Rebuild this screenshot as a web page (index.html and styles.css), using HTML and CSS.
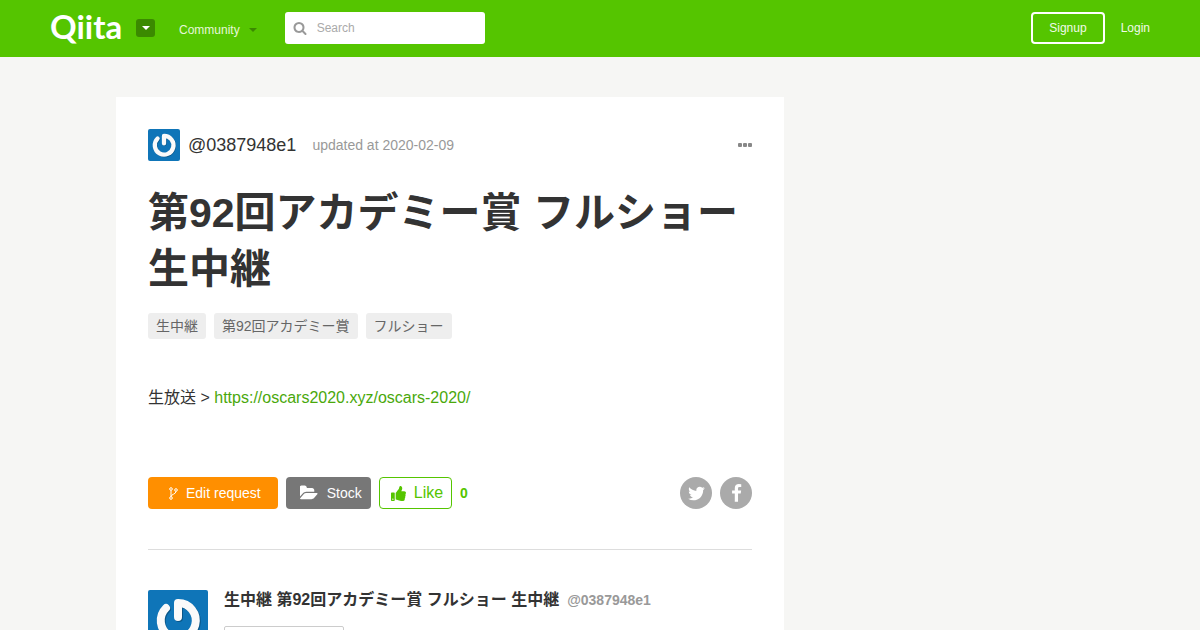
FILE: index.html
```html
<!DOCTYPE html>
<html lang="ja">
<head>
    <meta charset="UTF-8">
    <meta name="viewport" content="width=device-width, initial-scale=1.0">
    <title>第92回アカデミー賞 フルショー 生中継 - Qiita</title>
    <link rel="stylesheet" href="styles.css">
</head>
<body>
    <!-- Shared avatar drawing -->
    <svg class="defs" width="0" height="0" aria-hidden="true">
        <symbol id="avatar" viewBox="0 0 60 60">
            <rect width="60" height="60" fill="#0f75b8"/>
            <path d="M18 18A17.500 17.500 0 1 0 30 13V27" fill="none" stroke="#0a5688" stroke-width="8" stroke-linecap="round" stroke-linejoin="round" transform="translate(1 1)"/>
            <path d="M18 18A17.500 17.500 0 1 0 30 13V27" fill="none" stroke="#fafafa" stroke-width="8" stroke-linecap="round" stroke-linejoin="round"/>
        </symbol>
    </svg>

    <header class="header">
        <div class="header-left">
            <a class="logo" href="#">Qiita</a>
            <button class="logo-toggle" type="button" aria-label="Switch service"><span class="caret"></span></button>
            <button class="community" type="button">Community <span class="caret caret-dark"></span></button>
            <form class="search">
                <svg class="search-icon" viewBox="0 0 1792 1792" aria-hidden="true"><path d="M1216 832q0-185-131.500-316.500t-316.500-131.500-316.500 131.500-131.500 316.500 131.500 316.500 316.500 131.500 316.500-131.500 131.500-316.500zm512 832q0 52-38 90t-90 38q-54 0-90-38l-343-342q-179 124-399 124-143 0-273.500-55.500t-225-150-150-225-55.500-273.500 55.500-273.500 150-225 225-150 273.500-55.500 273.500 55.500 225 150 150 225 55.500 273.500q0 220-124 399l343 343q37 37 37 90z"/></svg>
                <input type="text" placeholder="Search" aria-label="Search">
            </form>
        </div>
        <div class="header-right">
            <a class="signup" href="#">Signup</a>
            <a class="login" href="#">Login</a>
        </div>
    </header>

    <main class="container">
        <article class="article">
            <div class="article-meta">
                <svg class="avatar-small" aria-hidden="true"><use href="#avatar"/></svg>
                <a class="user-name" href="#">@0387948e1</a>
                <span class="updated">updated at 2020-02-09</span>
                <button class="more" type="button" aria-label="More"><span></span><span></span><span></span></button>
            </div>

            <h1>第92回アカデミー賞 フルショー 生中継</h1>

            <div class="tags">
                <a class="tag" href="#">生中継</a>
                <a class="tag" href="#">第92回アカデミー賞</a>
                <a class="tag" href="#">フルショー</a>
            </div>

            <p class="article-body">生放送 &gt; <a href="#">https://oscars2020.xyz/oscars-2020/</a></p>

            <div class="actions">
                <button class="btn btn-edit" type="button">
                    <svg viewBox="0 0 9 13" aria-hidden="true"><g fill="none" stroke="currentColor"><circle cx="2" cy="2" r="1.300"/><circle cx="2" cy="11" r="1.300"/><circle cx="7" cy="3" r="1.300"/><path d="M2 3.300V9.700M7 4.300C7 7.500 2 7 2 9.700"/></g></svg>
                    Edit request
                </button>
                <button class="btn btn-stock" type="button">
                    <svg viewBox="0 0 1856 1792" aria-hidden="true"><path d="M1815 952q0 31-31 66l-336 396q-43 51-120.500 86.500t-143.500 35.500h-1088q-34 0-60.500-13t-26.500-43q0-31 31-66l336-396q43-51 120.500-86.500t143.500-35.500h1088q34 0 60.500 13t26.500 43zm-343-344v160h-832q-94 0-197 47.500t-164 119.500l-337 396-5 6q0-4-.5-12.500t-.5-12.500v-960q0-92 66-158t158-66h320q92 0 158 66t66 158v32h544q92 0 158 66t66 158z"/></svg>
                    Stock
                </button>
                <button class="btn btn-like" type="button">
                    <svg viewBox="0 0 512 512" aria-hidden="true"><path d="M104 224H24c-13.255 0-24 10.745-24 24v240c0 13.255 10.745 24 24 24h80c13.255 0 24-10.745 24-24V248c0-13.255-10.745-24-24-24zM64 472c-13.255 0-24-10.745-24-24s10.745-24 24-24 24 10.745 24 24-10.745 24-24 24zM384 81.452c0 42.416-25.970 66.208-33.277 94.548h101.723c33.397 0 59.397 27.746 59.553 58.098.084 17.938-7.546 37.249-19.439 49.197l-.11.11c9.836 23.337 8.237 56.037-9.308 79.469 8.681 25.895-.069 57.704-16.382 74.757 4.298 17.598 2.244 32.575-6.148 44.632C440.202 511.587 389.616 512 346.839 512l-2.845-.001c-48.287-.017-87.806-17.598-119.560-31.725-15.957-7.099-36.821-15.887-52.651-16.178-6.540-.12-11.783-5.457-11.783-11.998v-213.770c0-3.200 1.282-6.271 3.558-8.521 39.614-39.144 56.648-80.587 89.117-113.111 14.804-14.832 20.188-37.236 25.393-58.902C282.515 39.293 291.817 0 312 0c24 0 72 8 72 81.452z"/></svg>
                    Like
                </button>
                <a class="like-count" href="#">0</a>
                <div class="share">
                    <a href="#" aria-label="Twitter"><svg viewBox="0 0 1792 1792"><path d="M1684 408q-67 98-162 167 1 14 1 42 0 130-38 259.500t-115.500 248.500-184.500 210.500-258 146-323 54.500q-271 0-496-145 35 4 78 4 225 0 401-138-105-2-188-64.500t-114-159.500q33 5 61 5 43 0 85-11-112-23-185.500-111.500t-73.500-205.500v-4q68 38 146 41-66-44-105-115t-39-154q0-88 44-163 121 149 294.500 238.500t371.500 99.500q-8-38-8-74 0-134 94.500-228.500t228.500-94.500q140 0 236 102 109-21 205-78-37 115-142 178 93-10 186-50z"/></svg></a>
                    <a href="#" aria-label="Facebook"><svg viewBox="0 0 1792 1792"><path d="M1343 12v264h-157q-86 0-116 36t-30 108v189h293l-39 296h-254v759h-306v-759h-255v-296h255v-218q0-186 104-288.500t277-102.500q147 0 228 12z"/></svg></a>
                </div>
            </div>

            <div class="author">
                <svg class="avatar-large" aria-hidden="true"><use href="#avatar"/></svg>
                <div class="author-info">
                    <div class="author-name">
                        <a href="#">生中継 第92回アカデミー賞 フルショー 生中継</a>
                        <a class="author-id" href="#">@0387948e1</a>
                    </div>
                    <button class="follow" type="button" aria-label="Follow"></button>
                </div>
            </div>
        </article>
    </main>
</body>
</html>
```
FILE: styles.css
```css
* {
    box-sizing: border-box;
}

body {
    margin: 0;
    font-family: "Liberation Sans", "Noto Sans CJK JP", sans-serif;
    background-color: #f6f6f4;
    color: #333;
}

a {
    color: inherit;
    text-decoration: none;
}

button {
    padding: 0;
    border: none;
    background: none;
    font-family: inherit;
    cursor: pointer;
}

svg {
    flex: none;
    fill: currentColor;
}

.defs {
    position: absolute;
}

/* Header */
.header {
    display: flex;
    justify-content: space-between;
    align-items: center;
    height: 57px;
    padding: 0 50px 1px;
    background-color: #55c500;
    color: #fff;
    font-size: 12px;
}

.header-left,
.header-right {
    display: flex;
    align-items: center;
}

.logo {
    width: 75px;
    padding-bottom: 4px;
    font-family: Lato, sans-serif;
    font-size: 33px;
    font-weight: bold;
    line-height: 40px;
}

.logo-toggle {
    display: flex;
    justify-content: center;
    align-items: center;
    width: 19px;
    height: 18px;
    margin-left: 11px;
    border-radius: 3px;
    background-color: #3b8a00;
    color: #fff;
}

.caret {
    border-top: 4px solid currentColor;
    border-left: 4px solid transparent;
    border-right: 4px solid transparent;
}

.caret-dark {
    color: #3b8a00;
}

.community {
    display: flex;
    align-items: center;
    gap: 9px;
    margin: 4px 28px 0 24px;
    color: #e6f7d9;
    font-size: 12px;
}

.search {
    position: relative;
}

.search-icon {
    position: absolute;
    top: 9px;
    left: 8px;
    width: 14px;
    height: 14px;
    color: #999;
}

.search input {
    display: block;
    width: 200px;
    height: 32px;
    padding: 0 8px 0 32px;
    border: none;
    border-radius: 3px;
    background-color: #fff;
    font-family: inherit;
    font-size: 12px;
}

.search input::placeholder {
    color: #aaa;
}

.header-right {
    gap: 16px;
    color: #f0fae8;
}

.signup {
    padding: 0 16px;
    border: 2px solid #fff;
    border-radius: 4px;
    line-height: 28px;
}

/* Article */
.container {
    max-width: 968px;
    margin: 40px auto;
}

.article {
    max-width: 668px;
    padding: 32px;
    background-color: #fff;
}

.article-meta {
    display: flex;
    align-items: center;
}

.avatar-small {
    width: 32px;
    height: 32px;
    border-radius: 2px;
}

.user-name {
    margin: 0 16px 0 8px;
    font-size: 18px;
}

.updated {
    color: #999;
    font-size: 14px;
}

.more {
    display: flex;
    gap: 1px;
    margin-left: auto;
}

.more span {
    width: 4px;
    height: 4px;
    border-radius: 1px;
    background-color: #888;
}

h1 {
    margin: 24px 0 16px;
    font-size: 41px;
    line-height: 56px;
}

.tags {
    display: flex;
    flex-wrap: wrap;
    gap: 8px;
}

.tag {
    padding: 0 8px;
    border-radius: 3px;
    background-color: #eee;
    color: #666;
    font-size: 14px;
    line-height: 26px;
}

.article-body {
    margin: 44px 0 64px;
    font-size: 16px;
    line-height: 30px;
}

.article-body a {
    color: #4aa80b;
}

.actions {
    display: flex;
    align-items: center;
    gap: 8px;
    padding-bottom: 40px;
    border-bottom: 1px solid #ddd;
}

.btn {
    display: flex;
    justify-content: center;
    align-items: center;
    height: 32px;
    border-radius: 4px;
    color: #fff;
    font-size: 14px;
}

.btn-edit {
    gap: 8px;
    padding: 0 17px 0 21px;
    background-color: #ff8f00;
}

.btn-edit svg {
    width: 9px;
    height: 13px;
}

.btn-stock {
    gap: 9px;
    padding: 0 9px 0 14px;
    background-color: #777;
}

.btn-stock svg {
    width: 18px;
    height: 18px;
}

.btn-like {
    gap: 8px;
    padding: 0 8px 0 11px;
    border: 1px solid #55c500;
    color: #55c500;
    font-size: 16px;
}

.btn-like svg {
    width: 15px;
    height: 15px;
}

.like-count {
    color: #55c500;
    font-size: 14px;
    font-weight: bold;
}

.share {
    display: flex;
    gap: 8px;
    margin-left: auto;
}

.share a {
    display: flex;
    justify-content: center;
    align-items: center;
    width: 32px;
    height: 32px;
    border-radius: 50%;
    background-color: #aaa;
    color: #fff;
}

.share svg {
    width: 19px;
    height: 19px;
}

/* Author */
.author {
    display: flex;
    gap: 16px;
    margin-top: 40px;
}

.avatar-large {
    width: 60px;
    height: 60px;
    border-radius: 2px;
}

.author-name {
    display: flex;
    align-items: baseline;
    gap: 8px;
    font-size: 16px;
    font-weight: bold;
    line-height: 20px;
}

.author-id {
    color: #999;
    font-size: 14px;
}

.follow {
    display: block;
    width: 120px;
    height: 32px;
    margin-top: 16px;
    border: 1px solid #ccc;
    border-radius: 2px;
}
```
